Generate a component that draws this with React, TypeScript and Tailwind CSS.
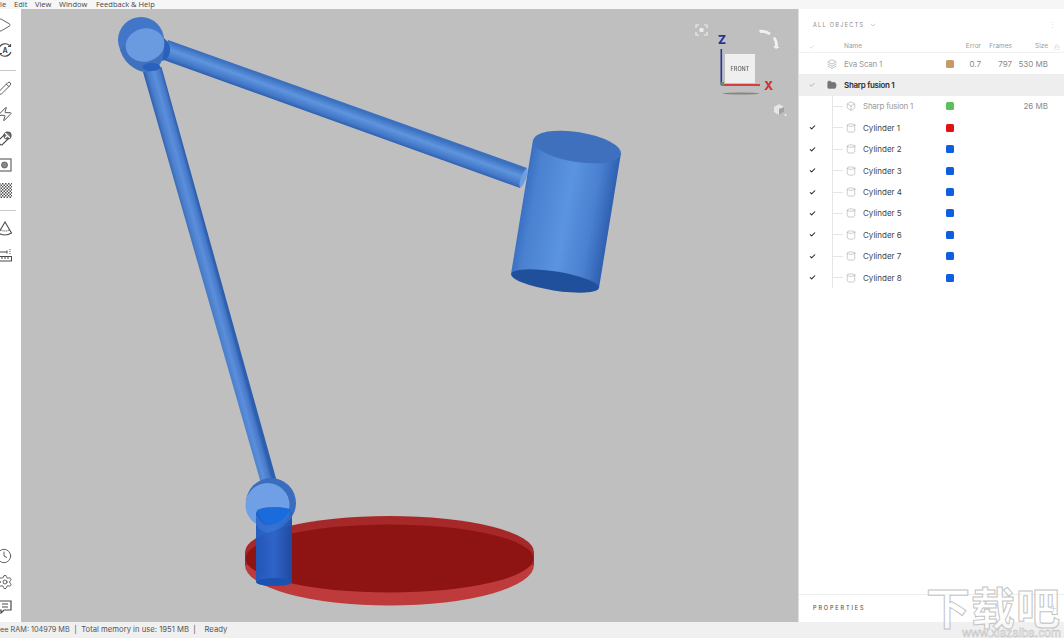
import { Box, Check, ChevronDown, Clock, Cylinder, FolderOpen, Layers, Lock, Pencil, Play, Plus, Settings, Zap } from "lucide-react";
import type { ReactNode } from "react";

const sans = "font-['Inter','Liberation_Sans',sans-serif]";

function ToolSlot({ children }: { children: ReactNode }) {
	return <div className="flex h-[25.5px] w-[21px] shrink-0 items-center text-[#4a4a4a]">{children}</div>;
}

function Toolbar() {
	return (
		<aside className="flex w-[21px] shrink-0 flex-col overflow-hidden bg-white">
			<div className="mt-[3px]" />
			<ToolSlot>
				<Play size={16} strokeWidth={1.3} className="-ml-[4px]" />
			</ToolSlot>
			<ToolSlot>
				<svg width="16" height="16" viewBox="0 0 16 16" fill="none" stroke="currentColor" strokeWidth="1.1" className="-ml-[3px]">
					<path d="M2 6 A6.5 6.5 0 0 1 13 4 M14 10 A6.5 6.5 0 0 1 3 12" />
					<path d="M13.5 2 V4.5 H11 M2.5 14 V11.5 H5" />
					<text x="8" y="10.5" textAnchor="middle" fontSize="7" fontWeight="700" fill="currentColor" stroke="none" fontFamily="Inter">A</text>
				</svg>
			</ToolSlot>
			<div className="mt-[7px] h-px w-[16px] shrink-0 bg-[#c9c9c9]" />
			<div className="mt-[4.5px]" />
			<ToolSlot>
				<Pencil size={15} strokeWidth={1.4} className="-ml-[3px]" />
			</ToolSlot>
			<ToolSlot>
				<Zap size={16} strokeWidth={1.4} className="-ml-[3px]" />
			</ToolSlot>
			<ToolSlot>
				<svg width="16" height="16" viewBox="0 0 16 16" fill="none" stroke="currentColor" strokeWidth="1.1" className="-ml-[3px]">
					<path d="M1 10 L8 3 L12 7 L5 14 Q2.5 14 1 10 Z" />
					<circle cx="10.5" cy="4.5" r="3.5" fill="#777" />
					<path d="M8 7 L10.5 4.5 M8 2 L13 7" stroke="#fff" />
				</svg>
			</ToolSlot>
			<ToolSlot>
				<svg width="16" height="14" viewBox="0 0 16 14" fill="none" className="-ml-[4px]">
					<rect x="1" y="1" width="14" height="12" stroke="#666" strokeWidth="1.2" />
					<circle cx="8.5" cy="7" r="3" fill="#888" stroke="#555" strokeWidth="0.8" />
				</svg>
			</ToolSlot>
			<ToolSlot>
				<svg width="16" height="15" viewBox="0 0 16 15" className="-ml-[4px]">
					<defs>
						<pattern id="checks" width="3" height="3" patternUnits="userSpaceOnUse">
							<rect width="1.5" height="1.5" fill="#555" />
							<rect x="1.5" y="1.5" width="1.5" height="1.5" fill="#555" />
						</pattern>
					</defs>
					<rect width="16" height="15" fill="url(#checks)" />
				</svg>
			</ToolSlot>
			<div className="mt-[7px] h-px w-[16px] shrink-0 bg-[#c9c9c9]" />
			<div className="mt-[5.5px]" />
			<ToolSlot>
				<svg width="16" height="16" viewBox="0 0 16 16" fill="none" stroke="currentColor" strokeWidth="1.1" className="-ml-[3px]">
					<path d="M8 1 L1.5 12 Q8 16 14.5 12 Z" />
					<path d="M3.5 9 Q8 11 12.5 9" strokeDasharray="1 1" />
				</svg>
			</ToolSlot>
			<ToolSlot>
				<svg width="16" height="14" viewBox="0 0 16 14" fill="none" stroke="currentColor" strokeWidth="1" className="-ml-[4px]">
					<path d="M3 4 H11 M3 2.5 V5.5 M11 2.5 V5.5" />
					<path d="M14 1 V6" strokeDasharray="1 1" />
					<rect x="0.5" y="8.5" width="15" height="4.5" />
					<path d="M3 9 V11 M6 9 V11 M9 9 V11 M12 9 V11" />
				</svg>
			</ToolSlot>
			<div className="mt-auto" />
			<ToolSlot>
				<Clock size={16} strokeWidth={1.3} className="-ml-[4px]" />
			</ToolSlot>
			<ToolSlot>
				<Settings size={16} strokeWidth={1.3} className="-ml-[3px]" />
			</ToolSlot>
			<ToolSlot>
				<svg width="16" height="14" viewBox="0 0 16 14" fill="none" stroke="currentColor" strokeWidth="1.2" className="-ml-[4px]">
					<path d="M1 1 H15 V10 H8 L5 13 V10 H1 Z" />
					<path d="M6 4 H12 M6 7 H12" />
				</svg>
			</ToolSlot>
			<div className="mb-[2px]" />
		</aside>
	);
}

function Scene() {
	return (
		<svg className="absolute inset-0 blur-[0.3px]" width="777" height="613" viewBox="21 9 777 613">
			<defs>
				<linearGradient id="upperArm" gradientUnits="userSpaceOnUse" x1="168" y1="41" x2="161.5" y2="59">
					<stop offset="0" stopColor="#3b70c0" />
					<stop offset="0.4" stopColor="#5f94de" />
					<stop offset="0.8" stopColor="#4378c8" />
					<stop offset="1" stopColor="#2d5eae" />
				</linearGradient>
				<linearGradient id="lowerArm" gradientUnits="userSpaceOnUse" x1="143" y1="72" x2="161.5" y2="67">
					<stop offset="0" stopColor="#2d5dac" />
					<stop offset="0.25" stopColor="#4a7eca" />
					<stop offset="0.55" stopColor="#5b8edb" />
					<stop offset="0.85" stopColor="#4679c8" />
					<stop offset="1" stopColor="#2e5eae" />
				</linearGradient>
				<linearGradient id="lamp" gradientUnits="userSpaceOnUse" x1="522" y1="205" x2="610" y2="220">
					<stop offset="0" stopColor="#3a70c2" />
					<stop offset="0.12" stopColor="#4a81d0" />
					<stop offset="0.5" stopColor="#5b94e0" />
					<stop offset="0.8" stopColor="#4a80d0" />
					<stop offset="1" stopColor="#2f60b0" />
				</linearGradient>
				<linearGradient id="post" gradientUnits="userSpaceOnUse" x1="256" y1="550" x2="292" y2="550">
					<stop offset="0" stopColor="#1d58c0" />
					<stop offset="0.5" stopColor="#2a68d2" />
					<stop offset="1" stopColor="#1a4ca8" />
				</linearGradient>
			</defs>

			{/* base disc */}
			<ellipse cx="389.5" cy="565" rx="144.5" ry="40.5" fill="#bf3a3a" />
			<rect x="245" y="552" width="289" height="13" fill="#a82a2a" />
			<ellipse cx="389.5" cy="552" rx="144.5" ry="36" fill="#a62828" />
			<ellipse cx="389.5" cy="558.5" rx="144" ry="34" fill="#8e1414" />

			{/* arms */}
			<polygon points="143,72 161.5,67 277,482 262,487" fill="url(#lowerArm)" />
			<polygon points="168,40 527,168 520,188 161,59" fill="url(#upperArm)" />
			<ellipse cx="523.5" cy="178" rx="2.5" ry="10" transform="rotate(20 523.5 178)" fill="#6d9ee2" />

			{/* lamp head */}
			<path d="M533 140 L511 274 Q533 292 599 288 L621 153 Z" fill="url(#lamp)" />
			<ellipse cx="577" cy="147" rx="44.5" ry="15" transform="rotate(9 577 147)" fill="#3e70bd" />
			<ellipse cx="555" cy="281" rx="44.5" ry="9.5" transform="rotate(9 555 281)" fill="#204f9c" />

			{/* top joint */}
			<circle cx="141" cy="40" r="23" fill="#4276c8" />
			<path d="M120 50 Q124 62 134 68 Q143 74 152 71 Q162 66 165 52 L164 40 L130 40 Z" fill="#3f71be" />
			<ellipse cx="145" cy="45" rx="19.5" ry="16.5" transform="rotate(-12 145 45)" fill="#6a9ae0" />
			<path d="M164 38 Q171 44 170 52 Q168 60 162 61 Q165 50 164 38 Z" fill="#2a60be" />
			<ellipse cx="151.5" cy="67" rx="9" ry="4" fill="#2a60be" />

			{/* bottom joint */}
			<circle cx="271" cy="503" r="25" fill="#3a6dbe" />
			<circle cx="267.5" cy="505" r="22" fill="#6f9fe4" />

			{/* post */}
			<path d="M256 514 Q256 507 274 507 Q292 507 292 514 V580 Q292 586 274 586 Q256 586 256 580 Z" fill="url(#post)" fillOpacity="0.95" />
			<path d="M257 510 Q272 506 291 509 Q288 524 272 524 Q260 524 257 510 Z" fill="#1a6cdc" />
			<path d="M256 514 Q262 528 272 525 Q282 523 291 510 L292 518 Q280 530 268 533 Q260 532 256 524 Z" fill="#3a7ad4" fillOpacity="0.6" />
			<ellipse cx="274" cy="582" rx="18" ry="4" fill="#1b52b0" />

			{/* view cube */}
			<g>
				<g fill="none" stroke="#ededed" strokeWidth="1.2">
					<path d="M696 28 V25 H699 M704 25 H707 V28 M707 32 V35 H704 M699 35 H696 V32" />
				</g>
				<rect x="699.5" y="28" width="4" height="4" rx="1" fill="#ededed" />
				<path d="M759 30 Q765 29 771 33 L769 35 Q764 32 760 33 Z" fill="#f1f1f1" />
				<path d="M775 37 Q778 40 778 47 H780 L776 49 L773 46 L775 46 Q775 41 773 38 Z" fill="#f1f1f1" />
				<rect x="725" y="54" width="30" height="29" fill="#efefef" />
				<text x="740" y="71" textAnchor="middle" fontSize="5.5" fontWeight="600" fill="#707070" fontFamily="Inter">FRONT</text>
				<ellipse cx="741" cy="93.5" rx="18" ry="1" fill="#858585" />
				<rect x="720.5" y="49" width="1.6" height="36" fill="#23359a" />
				<rect x="722" y="84" width="38" height="2" fill="#d44040" />
				<rect x="721" y="82" width="3" height="4" fill="#5b9a48" />
				<text x="722" y="44" textAnchor="middle" fontSize="12" fontWeight="800" fill="#23359a" fontFamily="Inter">Z</text>
				<text x="768.5" y="90" textAnchor="middle" fontSize="12" fontWeight="800" fill="#d93030" fontFamily="Inter">X</text>
				<path d="M774 107 L779 104 L784 107 V112 L779 115 L774 112 Z" fill="#e6e6e6" />
				<path d="M779 109 L784 107 V112 L779 115 Z" fill="#a3a3a3" />
				<circle cx="785.5" cy="115" r="1" fill="#f2f2f2" />
			</g>
		</svg>
	);
}

type RowProps = {
	name: string;
	color: string;
	checked?: boolean;
	muted?: boolean;
	error?: string;
	frames?: string;
	size?: string;
};

function Stats({ color, error, frames, size }: Pick<RowProps, "color" | "error" | "frames" | "size">) {
	return (
		<>
			<span className="h-2 w-2 shrink-0 rounded-[1.5px]" style={{ backgroundColor: color }} />
			<span className="w-[27px] shrink-0 text-right text-[#8a8a8a]">{error}</span>
			<span className="w-[31px] shrink-0 text-right text-[#8a8a8a]">{frames}</span>
			<span className="w-[36px] shrink-0 text-right text-[#8a8a8a]">{size}</span>
			<span className="w-[16px] shrink-0" />
		</>
	);
}

function ChildRow({ name, color, checked, muted, size }: RowProps) {
	return (
		<div className="flex h-[21.4px] items-center">
			<div className="flex w-[26px] shrink-0 justify-center">
				{checked && <Check size={7} strokeWidth={3.5} className="text-[#222]" />}
			</div>
			<div className="ml-[7px] h-full w-px shrink-0 bg-[#e6e6e6]" />
			<div className="h-px w-[10px] shrink-0 bg-[#e6e6e6]" />
			<div className="ml-[3px] w-[10px] shrink-0 text-[#9a9a9a]">
				{muted ? <Box size={10} strokeWidth={1.2} /> : <Cylinder size={10} strokeWidth={1.2} />}
			</div>
			<span className={`ml-[7px] flex-1 ${muted ? "tracking-[-0.25px] text-[#9b9b9b]" : "text-[#444]"}`}>{name}</span>
			<Stats color={color} size={size} />
		</div>
	);
}

function ObjectsPanel() {
	const cylinders = ["Cylinder 1", "Cylinder 2", "Cylinder 3", "Cylinder 4", "Cylinder 5", "Cylinder 6", "Cylinder 7", "Cylinder 8"];
	return (
		<aside className={`flex w-[266px] shrink-0 flex-col border-l border-[#dedede] bg-white text-[8px] ${sans}`}>
			<div className="flex h-[32px] shrink-0 items-start pl-[14px] pt-[12px] text-[5.5px] tracking-[0.24em] text-[#8a8a8a]">
				<span>ALL OBJECTS</span>
				<ChevronDown size={8} strokeWidth={1.2} className="ml-[5px]" />
				<span className="ml-auto mr-[7px] text-[7px] leading-[8px] text-[#d5d5d5]">⋮</span>
			</div>
			<div className="flex h-[12px] shrink-0 items-center border-b border-[#f1f1f1] text-[6.5px] text-[#9a9a9a]">
				<div className="flex w-[26px] shrink-0 justify-center">
					<Check size={6} strokeWidth={2} className="text-[#bbb]" />
				</div>
				<span className="ml-[19px] flex-1">Name</span>
				<span className="w-[27px] text-right">Error</span>
				<span className="w-[31px] text-right">Frames</span>
				<span className="w-[36px] text-right">Size</span>
				<span className="flex w-[16px] justify-center pl-[1px]">
					<Lock size={6} strokeWidth={1.2} className="text-[#bbb]" />
				</span>
			</div>
			<div className="flex h-[21.4px] shrink-0 items-center">
				<div className="w-[26px] shrink-0" />
				<Layers size={10} strokeWidth={1.2} className="ml-[1px] shrink-0 translate-x-[1px] text-[#888]" />
				<span className="ml-[8px] flex-1 tracking-[-0.25px] text-[#9b9b9b]">Eva Scan 1</span>
				<Stats color="#c59a67" error="0.7" frames="797" size="530 MB" />
			</div>
			<div className="flex h-[21.4px] shrink-0 items-center bg-[#eeeeee]">
				<div className="flex w-[26px] shrink-0 justify-center">
					<Check size={6} strokeWidth={2.5} className="text-[#888]" />
				</div>
				<FolderOpen size={10} strokeWidth={1.5} fill="#777" className="ml-[1px] shrink-0 translate-x-[1px] text-[#666]" />
				<span className="ml-[8px] font-semibold tracking-[-0.3px] text-[#2d2d2d]">Sharp fusion 1</span>
			</div>
			<ChildRow name="Sharp fusion 1" color="#5ebf5e" muted size="26 MB" />
			{cylinders.map((name, i) => (
				<ChildRow key={name} name={name} color={i === 0 ? "#e01212" : "#0d5fe0"} checked />
			))}
			<div className="flex-1" />
			<div className="flex h-[28px] shrink-0 items-center justify-between border-t border-[#eeeeee] pl-[14px] pr-[6px] text-[5.5px] font-medium tracking-[0.34em] text-[#555]">
				<span>PROPERTIES</span>
				<Plus size={9} strokeWidth={1} className="text-[#555]" />
			</div>
		</aside>
	);
}

export default function App() {
	return (
		<div className="relative flex h-[638px] w-[1064px] flex-col overflow-hidden bg-white">
			<header className="flex h-[9px] shrink-0 items-start bg-[#f6f6f6] font-['Open_Sans',sans-serif] text-[7.5px] leading-[8px] text-[#444]">
				<span className="w-[14px]">le</span>
				<span className="w-[21px]">Edit</span>
				<span className="w-[24px]">View</span>
				<span className="w-[37px]">Window</span>
				<span>Feedback &amp; Help</span>
			</header>
			<div className="flex min-h-0 flex-1">
				<Toolbar />
				<main className="relative flex-1 bg-[#bfbfbf]">
					<Scene />
				</main>
				<ObjectsPanel />
			</div>
			<footer className={`flex h-[16px] shrink-0 items-center whitespace-pre bg-[#f0f0f0] text-[7.7px] text-[#555] ${sans}`}>
				<span className="w-[70px] text-[7.3px]">ee RAM: 104979 MB</span>
				<span>  |  Total memory in use: 1951 MB  |    Ready</span>
			</footer>
			{/* site watermark */}
			<div className="absolute right-[3px] top-[584px] flex flex-col items-end">
				<span className="font-['Noto_Sans_CJK_SC',sans-serif] text-[44px] font-bold leading-[44px] tracking-[1px] text-white/50 [-webkit-text-stroke:1px_#c4c4c4]">下载吧</span>
				<span className="font-['Liberation_Sans',sans-serif] text-[12px] leading-[10px] text-white/70 [-webkit-text-stroke:0.5px_#bdbdbd]">www.xiazaiba.com</span>
			</div>
		</div>
	);
}
